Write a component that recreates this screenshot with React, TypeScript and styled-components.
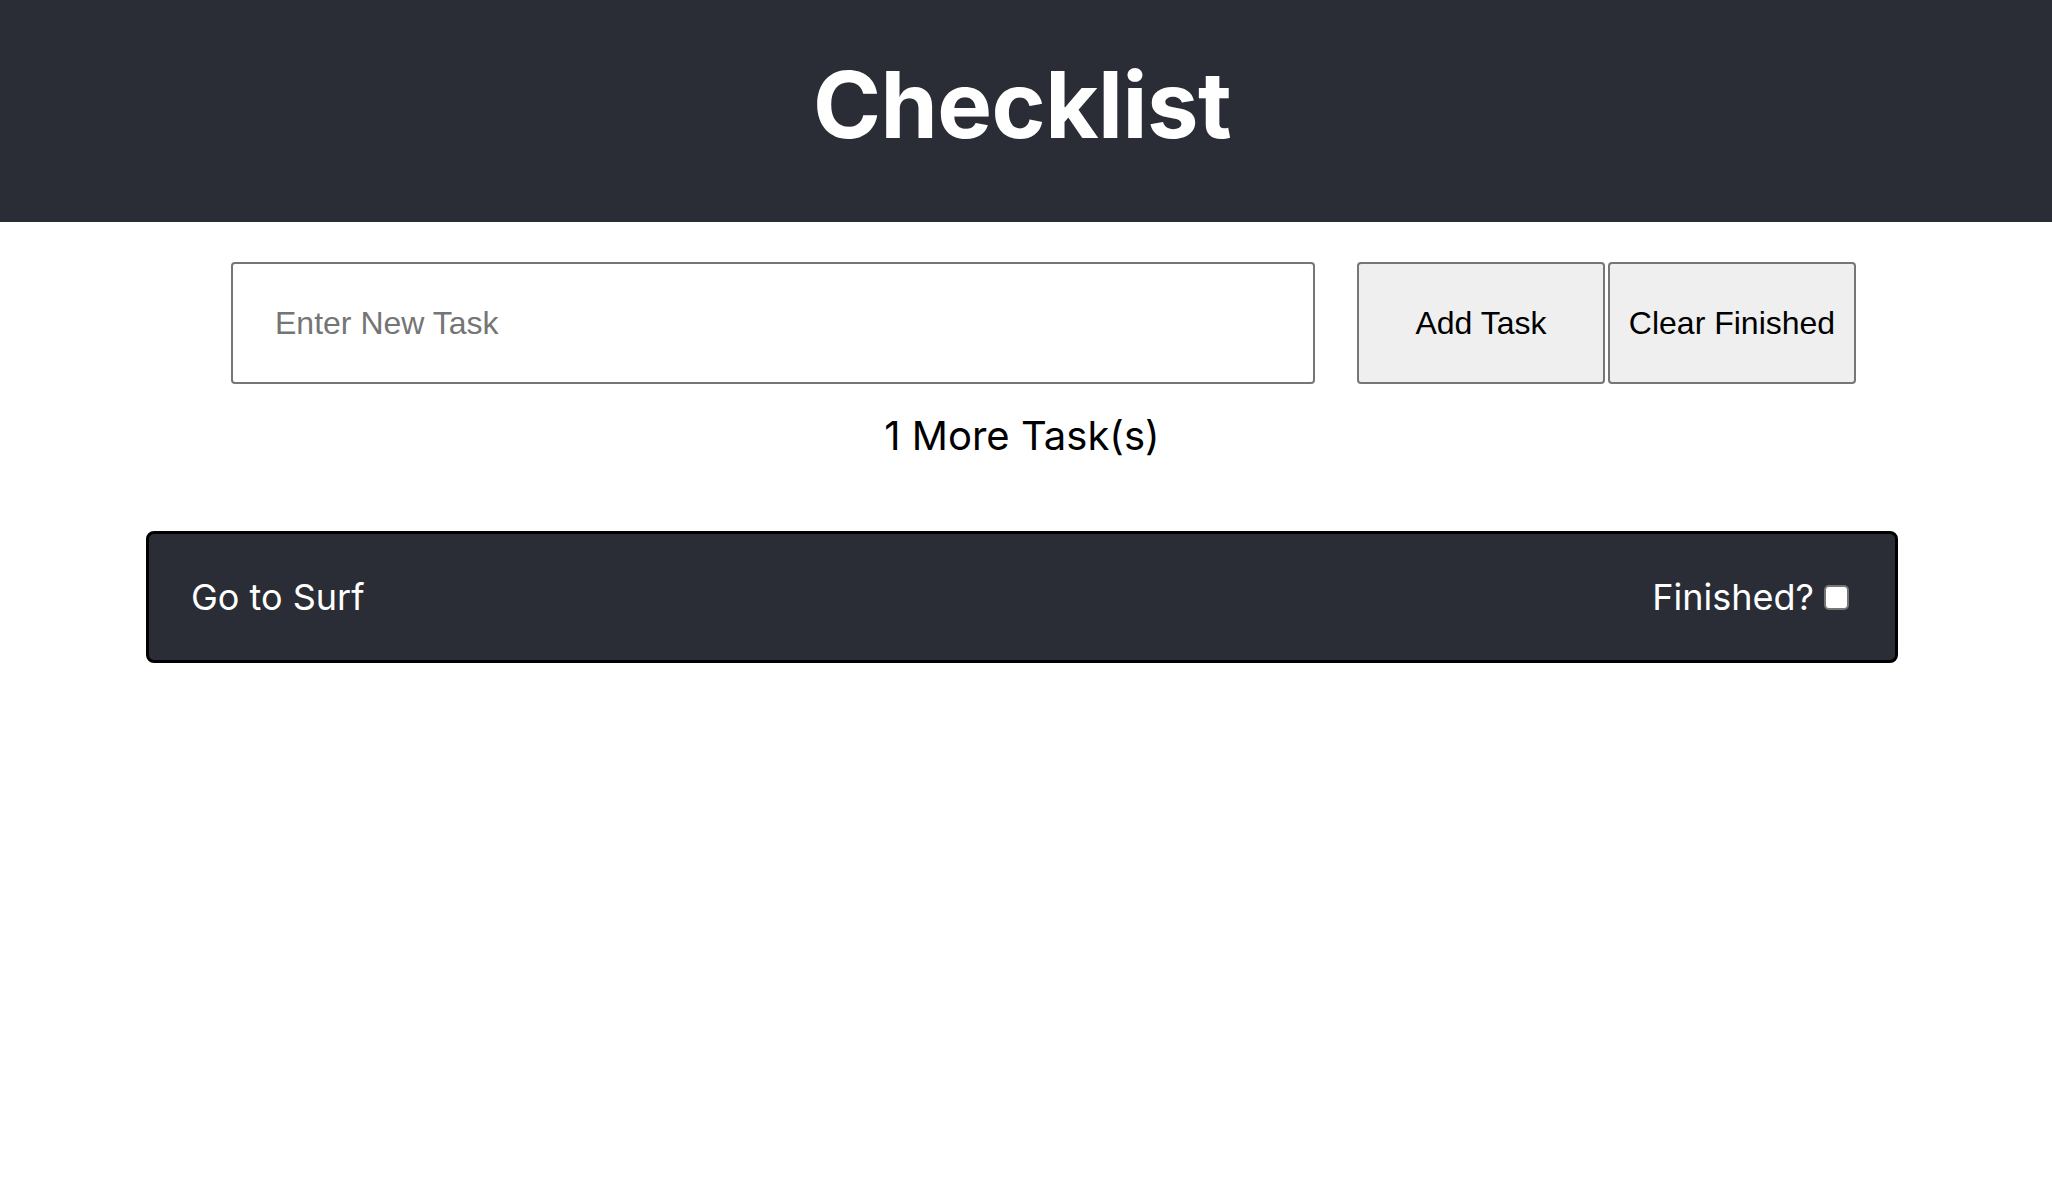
import React, { useState } from 'react';
import styled, { createGlobalStyle } from 'styled-components';

type taskType = {
  id: number;
  name: string;
  finished: boolean;
};

const GlobalStyle = createGlobalStyle`
  html, body {
    margin: 0;
    padding: 0;
    background: #ffffff;
  }
  body {
    font-family: Inter, "Noto Sans", sans-serif;
  }
`;

const App = () => {
  const [tasks, setTasks] = useState<taskType[]>([
    { id: 1, name: 'Go to Surf', finished: false },
  ]);
  const [text, setText] = useState('');

  const addTask = () => {
    if (!text.trim()) return;
    setTasks([...tasks, { id: Date.now(), name: text, finished: false }]);
    setText('');
  };

  const toggle = (id: number) => {
    setTasks(tasks.map((t) => (t.id === id ? { ...t, finished: !t.finished } : t)));
  };

  const clearFinished = () => setTasks(tasks.filter((t) => !t.finished));

  const remaining = tasks.filter((t) => !t.finished).length;

  return (
    <>
      <GlobalStyle />
      <Header>
        <Title>Checklist</Title>
      </Header>
      <Main>
        <Form
          onSubmit={(e) => {
            e.preventDefault();
            addTask();
          }}
        >
          <TaskInput
            placeholder="Enter New Task"
            value={text}
            onChange={(e) => setText(e.target.value)}
          />
          <Buttons>
            <Button type="submit">Add Task</Button>
            <Button type="button" onClick={clearFinished}>
              Clear Finished
            </Button>
          </Buttons>
        </Form>
        <Count>
          {remaining}
          {' '}
          More Task(s)
        </Count>
        <List>
          {tasks.map((task) => (
            <TaskCard key={task.id}>
              <TaskName>{task.name}</TaskName>
              <FinishedLabel>
                Finished?
                <Check
                  type="checkbox"
                  checked={task.finished}
                  onChange={() => toggle(task.id)}
                />
              </FinishedLabel>
            </TaskCard>
          ))}
        </List>
      </Main>
    </>
  );
};

const Header = styled.header`
  background-color: #2a2d35;
  height: 222px;
  box-sizing: border-box;
  padding: 59px 8px 0 0;
  display: flex;
  justify-content: center;
`;

const Title = styled.h1`
  margin: 0;
  color: #ffffff;
  font-family: Inter, "Noto Sans", sans-serif;
  font-weight: 700;
  font-size: 92px;
  line-height: 1;
  letter-spacing: -0.5px;
`;

const Main = styled.main`
  padding-right: 8px;
  display: flex;
  flex-direction: column;
`;

const Form = styled.form`
  display: flex;
  align-items: stretch;
  gap: 42px;
  margin: 40px 0 0 231px;
`;

const TaskInput = styled.input`
  width: 1084px;
  height: 122px;
  box-sizing: border-box;
  padding: 0 42px;
  border: 2px solid #767676;
  border-radius: 4px;
  font-family: "Liberation Sans", Arial, sans-serif;
  font-size: 32px;
  color: #000000;
  outline: none;
  &::placeholder {
    color: #757575;
  }
`;

const Buttons = styled.div`
  display: flex;
  gap: 3px;
`;

const Button = styled.button`
  width: 248px;
  height: 122px;
  box-sizing: border-box;
  padding: 0;
  background-color: #efefef;
  border: 2px solid #767676;
  border-radius: 4px;
  font-family: "Liberation Sans", Arial, sans-serif;
  font-size: 32px;
  color: #000000;
  cursor: pointer;
`;

const Count = styled.div`
  margin-top: 28px;
  text-align: center;
  font-family: Inter, "Noto Sans", sans-serif;
  font-size: 40px;
  line-height: 48px;
  color: #000000;
`;

const List = styled.ul`
  list-style: none;
  margin: 71px 146px 0;
  padding: 0;
  display: flex;
  flex-direction: column;
  gap: 20px;
`;

const TaskCard = styled.li`
  height: 132px;
  box-sizing: border-box;
  padding: 0 46px 0 42px;
  background-color: #2a2d35;
  border: 3px solid #000000;
  border-radius: 8px;
  display: flex;
  align-items: center;
  justify-content: space-between;
  color: #ffffff;
`;

const TaskName = styled.span`
  font-family: Inter, "Noto Sans", sans-serif;
  font-size: 36px;
`;

const FinishedLabel = styled.label`
  display: flex;
  align-items: center;
  gap: 10px;
  font-family: Inter, "Noto Sans", sans-serif;
  font-size: 36px;
`;

const Check = styled.input`
  appearance: none;
  margin: 0;
  width: 25px;
  height: 25px;
  box-sizing: border-box;
  background: #ffffff;
  border: 2px solid #767676;
  border-radius: 5px;
  cursor: pointer;
  &:checked {
    background: #0075ff;
    border-color: #0075ff;
  }
`;

export default App;
